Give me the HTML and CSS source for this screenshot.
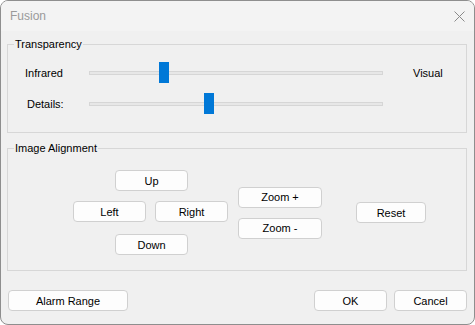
FILE: index.html
```html
<!DOCTYPE html>
<html lang="en">

<head>
    <meta charset="UTF-8">
    <meta name="viewport" content="width=device-width, initial-scale=1.0">
    <title>Fusion</title>
    <link rel="stylesheet" href="styles.css">
</head>

<body>
    <div class="window">
        <div class="titlebar">
            <span class="title">Fusion</span>
            <svg class="close" width="11" height="11" viewBox="0 0 11 11">
                <path d="M0.5 0.5 L10.5 10.5 M10.5 0.5 L0.5 10.5" stroke="#8a8a8a" stroke-width="1" fill="none" />
            </svg>
        </div>

        <div class="content">
            <fieldset class="group group-transparency">
                <legend>Transparency</legend>
                <div class="slider-row">
                    <span class="slider-label">Infrared</span>
                    <div class="track"><div class="thumb" style="left: 69px"></div></div>
                    <span class="slider-end">Visual</span>
                </div>
                <div class="slider-row">
                    <span class="slider-label indent">Details:</span>
                    <div class="track"><div class="thumb" style="left: 114px"></div></div>
                    <span></span>
                </div>
            </fieldset>

            <!-- move / zoom controls -->
            <fieldset class="group group-align">
                <legend>Image Alignment</legend>
                <div class="align-body">
                    <div class="pad">
                        <button class="btn btn-up">Up</button>
                        <button class="btn">Left</button>
                        <button class="btn">Right</button>
                        <button class="btn btn-down">Down</button>
                    </div>
                    <div class="zoom-col">
                        <button class="btn btn-zoom">Zoom +</button>
                        <button class="btn btn-zoom">Zoom -</button>
                    </div>
                    <button class="btn btn-reset">Reset</button>
                </div>
            </fieldset>

            <div class="footer">
                <button class="btn btn-alarm">Alarm Range</button>
                <div class="footer-right">
                    <button class="btn">OK</button>
                    <button class="btn">Cancel</button>
                </div>
            </div>
        </div>
    </div>
</body>

</html>
```

FILE: styles.css
```css
* {
    box-sizing: border-box;
}

body {
    margin: 0;
    background-color: #ffffff;
    font-family: "Liberation Sans", Arial, sans-serif;
    font-size: 11px;
    color: #000;
}

.window {
    width: 475px;
    height: 325px;
    border: 1px solid #8e8e8e;
    border-radius: 8px;
    background-color: #f0f0f0;
    overflow: hidden;
    display: flex;
    flex-direction: column;
}

.titlebar {
    height: 30px;
    background-color: #f3f3f3;
    display: flex;
    align-items: center;
    justify-content: space-between;
    padding: 0 9px 0 9px;
}

.title {
    color: #9a9a9a;
    font-size: 12px;
}

.close {
    display: block;
}

.content {
    padding: 0 7px 0 6px;
    display: flex;
    flex-direction: column;
}

.group {
    margin: 0;
    padding: 0;
    min-width: 0;
    border: 1px solid #d7d7d7;
}

.group legend {
    margin-left: 6px;
    padding: 0 1px;
    line-height: 13px;
    font-size: 11px;
}

.group-transparency {
    margin-top: 7px;
    padding: 11px 0 18px 0;
}

.slider-row {
    display: grid;
    grid-template-columns: 64px 294px auto;
    align-items: center;
    height: 21px;
    margin-left: 17px;
}

.slider-row + .slider-row {
    margin-top: 10px;
}

.slider-label.indent {
    padding-left: 2px;
}

.slider-end {
    padding-left: 30px;
}

.track {
    position: relative;
    height: 4px;
    background-color: #e7e7e7;
    border: 1px solid #d6d6d6;
}

.thumb {
    position: absolute;
    top: -10px;
    width: 10px;
    height: 21px;
    background-color: #0078d7;
}

.group-align {
    margin-top: 9px;
    padding: 15px 0 15px 0;
}

.align-body {
    display: flex;
    align-items: center;
    padding-left: 65px;
}

.pad {
    display: grid;
    grid-template-columns: 73px 73px;
    column-gap: 9px;
}

.btn-up,
.btn-down {
    grid-column: 1 / 3;
    margin-left: 42px;
}

.btn-up {
    margin-bottom: 10px;
}

.btn-down {
    margin-top: 12px;
}

.zoom-col {
    display: flex;
    flex-direction: column;
    gap: 10px;
    margin-left: 10px;
}

.btn {
    width: 73px;
    height: 21px;
    padding: 0;
    background-color: #fdfdfd;
    border: 1px solid #d0d0d0;
    border-radius: 4px;
    font-family: "Liberation Sans", Arial, sans-serif;
    font-size: 11px;
    color: #000;
}

.btn-zoom {
    width: 84px;
}

.btn-reset {
    width: 70px;
    margin-left: 34px;
}

.footer {
    margin-top: 19px;
    padding-left: 1px;
    display: flex;
    justify-content: space-between;
}

.btn-alarm {
    width: 120px;
}

.footer-right {
    display: flex;
    gap: 7px;
}
```
